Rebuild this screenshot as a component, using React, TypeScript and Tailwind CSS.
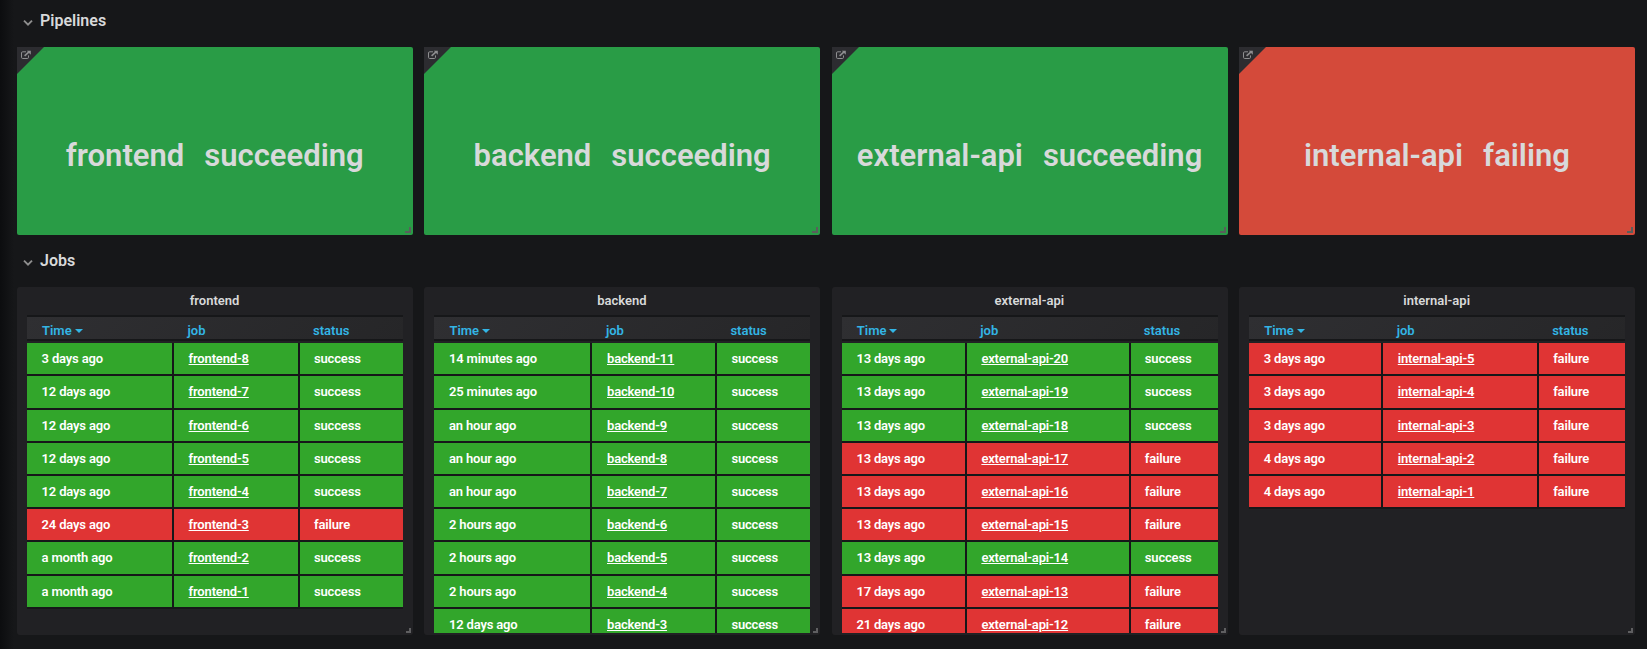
import React from "react";

type Job = { time: string; ok: boolean };
type Table = { name: string; cols: string; jobs: Job[]; first: number };

const j = (time: string, ok = true): Job => ({ time, ok });

const tables: Table[] = [
  {
    name: "frontend",
    cols: "grid-cols-[145px_124px_103px]",
    first: 8,
    jobs: [
      j("3 days ago"), j("12 days ago"), j("12 days ago"), j("12 days ago"), j("12 days ago"),
      j("24 days ago", false), j("a month ago"), j("a month ago"),
    ],
  },
  {
    name: "backend",
    cols: "grid-cols-[156px_123px_93px]",
    first: 11,
    jobs: [
      j("14 minutes ago"), j("25 minutes ago"), j("an hour ago"), j("an hour ago"), j("an hour ago"),
      j("2 hours ago"), j("2 hours ago"), j("2 hours ago"), j("12 days ago"),
    ],
  },
  {
    name: "external-api",
    cols: "grid-cols-[123px_162px_87px]",
    first: 20,
    jobs: [
      j("13 days ago"), j("13 days ago"), j("13 days ago"), j("13 days ago", false), j("13 days ago", false),
      j("13 days ago", false), j("13 days ago"), j("17 days ago", false), j("21 days ago", false),
    ],
  },
  {
    name: "internal-api",
    cols: "grid-cols-[132px_154px_86px]",
    first: 5,
    jobs: [
      j("3 days ago", false), j("3 days ago", false), j("3 days ago", false),
      j("4 days ago", false), j("4 days ago", false),
    ],
  },
];

const GRID = "grid grid-cols-[396px_396px_396px_396px] gap-x-[11.4px] pl-[17px]";

function RowTitle({ children }: { children: React.ReactNode }) {
  return (
    <div className="flex h-[47px] items-start pl-[23px] pt-[10px]">
      <svg className="mt-[9px] h-[8px] w-[10px]" viewBox="0 0 10 8" fill="none" stroke="#8e8e8e" strokeWidth="1.9">
        <path d="M1 1.6 L5 5.6 L9 1.6" />
      </svg>
      <h2 className="ml-[7px] text-[16px] leading-[21px] font-semibold text-[#d8d9da]">{children}</h2>
    </div>
  );
}

function ResizeHandle({ card }: { card?: boolean }) {
  return (
    <span
      className={
        card
          ? "absolute right-[2px] bottom-[2px] h-[6px] w-[6px] border-r-2 border-b-2 border-[#5a5f5c]"
          : "absolute right-[2px] bottom-[2px] h-[5px] w-[5px] border-r-2 border-b-2 border-[#5f5f61]"
      }
    />
  );
}

function StatusCard({ name, ok }: { name: string; ok: boolean }) {
  return (
    <div
      className={`relative flex h-[188px] items-center justify-center rounded-[2px] pt-[29px] ${
        ok ? "bg-[#299c46]" : "bg-[#d44a3a]"
      }`}
    >
      <svg className="absolute top-0 left-0 h-[27px] w-[27px]" viewBox="0 0 27 27">
        <path d="M0 0 H27 L0 27 Z" fill="#2c2c30" />
        <g fill="none" stroke="#8e8e90" strokeWidth="1">
          <path d="M11.5 8.4 V10.3 Q11.5 11.5 10.3 11.5 H5.7 Q4.5 11.5 4.5 10.3 V6 Q4.5 4.8 5.7 4.8 H9" />
          <path d="M7.6 8.8 L12 4.9" strokeWidth="1.6" />
        </g>
        <path d="M9.8 3.7 H13.8 V7.7 Z" fill="#8e8e90" />
      </svg>
      <div className="flex gap-[20px] pr-[0.5px] text-[31px] leading-[38px] font-semibold whitespace-nowrap text-[#d8d9da]">
        <span>{name}</span>
        <span>{ok ? "succeeding" : "failing"}</span>
      </div>
      <ResizeHandle card />
    </div>
  );
}

function JobTable({ name, cols, jobs, first }: Table) {
  return (
    <div className="relative h-[348px] overflow-hidden rounded-[3px] bg-[#212124] px-[10px] pb-[2px] text-[13px] font-semibold">
      <h3 className="h-[28px] pt-[4px] pr-px text-center leading-[20px] text-[#d8d9da]">{name}</h3>
      <div className="h-[318px] overflow-hidden">
        <div
          className={`grid ${cols} h-[26px] gap-x-[2px] border-y-2 border-[#161719] bg-[linear-gradient(135deg,#2f2f32,#262628)] pt-[4px] leading-[20px] text-[#33b5e5]`}
        >
          <div className="flex items-center pl-[15px] leading-[20px]">
            Time
            <span className="ml-[3px] h-0 w-0 border-x-4 border-t-4 border-x-transparent border-t-[#33b5e5]" />
          </div>
          <div className="pl-[13.5px]">job</div>
          <div className="pl-[13px]">status</div>
        </div>
        <div className="mt-[2px]">
          {jobs.map((job, i) => (
            <div
              key={i}
              className={`grid ${cols} gap-x-[2px] border-b-2 border-[#161719] bg-[#161719] leading-[31px] font-semibold tracking-[-0.17px] text-white ${
                i % 5 === 1 ? "h-[34px]" : "h-[33px]"
              }`}
            >
              {[job.time, `${name}-${first - i}`, job.ok ? "success" : "failure"].map((text, c) => (
                <div key={c} className={`${c === 2 ? "pl-[14px]" : "pl-[14.6px]"} ${job.ok ? "bg-[#32a62b]" : "bg-[#e03434]"}`}>
                  {c === 1 ? (
                    <a className="underline">{text}</a>
                  ) : (
                    text
                  )}
                </div>
              ))}
            </div>
          ))}
        </div>
      </div>
      <ResizeHandle />
    </div>
  );
}

export default function App() {
  return (
    <main className="h-[649px] overflow-hidden bg-[#161719] bg-[linear-gradient(to_right,#0c0d0f,#161719_14px)] font-['Roboto',sans-serif]">
      <RowTitle>Pipelines</RowTitle>
      <section className={GRID}>
        {tables.map((t) => (
          <StatusCard key={t.name} name={t.name} ok={t.name !== "internal-api"} />
        ))}
      </section>
      <div className="pt-[5px]">
        <RowTitle>Jobs</RowTitle>
      </div>
      <section className={GRID}>
        {tables.map((t) => (
          <JobTable key={t.name} {...t} />
        ))}
      </section>
    </main>
  );
}
